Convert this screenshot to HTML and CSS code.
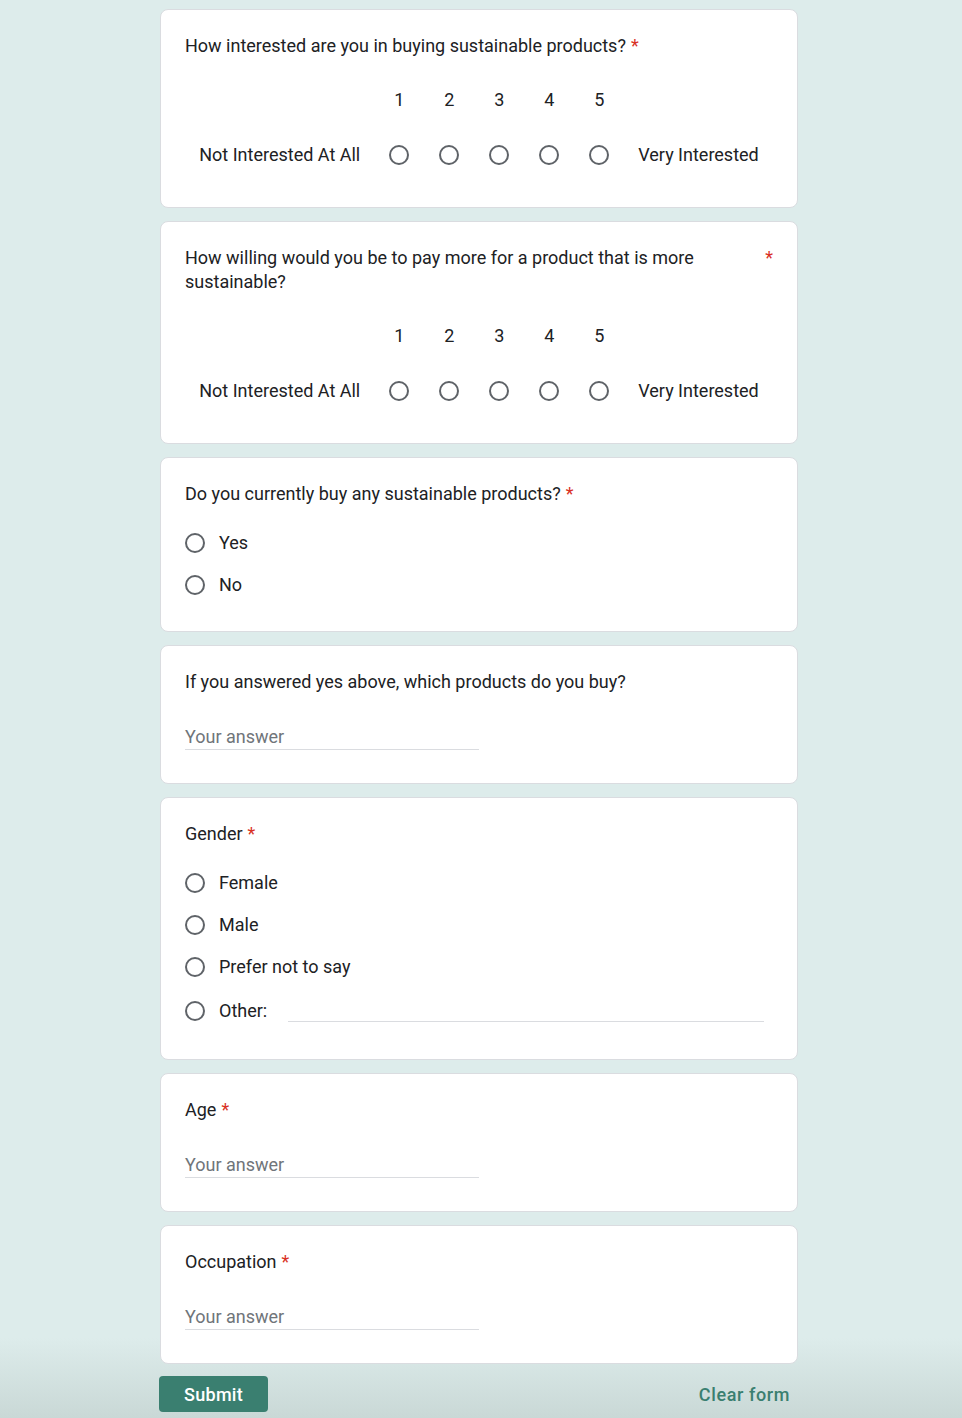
FILE: index.html
```html
<!DOCTYPE html>
<html lang="en">
<head>
<meta charset="utf-8">
<title>Sustainable products survey</title>
<link rel="stylesheet" href="styles.css">
</head>
<body>
<main class="page">
  <section class="card">
    <div class="title"><span class="title-text">How interested are you in buying sustainable products?</span><span class="req">*</span></div>
    <div class="scale">
      <span></span><span class="num">1</span><span class="num">2</span><span class="num">3</span><span class="num">4</span><span class="num">5</span><span></span>
      <span class="scale-label left">Not Interested At All</span>
      <span class="cell"><span class="radio"></span></span>
      <span class="cell"><span class="radio"></span></span>
      <span class="cell"><span class="radio"></span></span>
      <span class="cell"><span class="radio"></span></span>
      <span class="cell"><span class="radio"></span></span>
      <span class="scale-label right">Very Interested</span>
    </div>
  </section>

  <section class="card">
    <div class="title"><span class="title-text">How willing would you be to pay more for a product that is more sustainable?</span><span class="req">*</span></div>
    <div class="scale">
      <span></span><span class="num">1</span><span class="num">2</span><span class="num">3</span><span class="num">4</span><span class="num">5</span><span></span>
      <span class="scale-label left">Not Interested At All</span>
      <span class="cell"><span class="radio"></span></span>
      <span class="cell"><span class="radio"></span></span>
      <span class="cell"><span class="radio"></span></span>
      <span class="cell"><span class="radio"></span></span>
      <span class="cell"><span class="radio"></span></span>
      <span class="scale-label right">Very Interested</span>
    </div>
  </section>

  <section class="card card-options">
    <div class="title"><span class="title-text">Do you currently buy any sustainable products?</span><span class="req">*</span></div>
    <div class="options">
      <label class="option"><span class="radio"></span><span class="opt-text">Yes</span></label>
      <label class="option"><span class="radio"></span><span class="opt-text">No</span></label>
    </div>
  </section>

  <section class="card card-text">
    <div class="title"><span class="title-text">If you answered yes above, which products do you buy?</span></div>
    <div class="answer">Your answer</div>
  </section>

  <section class="card card-options">
    <div class="title"><span class="title-text">Gender</span><span class="req">*</span></div>
    <div class="options">
      <label class="option"><span class="radio"></span><span class="opt-text">Female</span></label>
      <label class="option"><span class="radio"></span><span class="opt-text">Male</span></label>
      <label class="option"><span class="radio"></span><span class="opt-text">Prefer not to say</span></label>
      <label class="option option-other"><span class="radio"></span><span class="opt-text">Other:</span><span class="other-line"></span></label>
    </div>
  </section>

  <section class="card card-text">
    <div class="title"><span class="title-text">Age</span><span class="req">*</span></div>
    <div class="answer">Your answer</div>
  </section>

  <section class="card card-text">
    <div class="title"><span class="title-text">Occupation</span><span class="req">*</span></div>
    <div class="answer">Your answer</div>
  </section>

  <div class="actions">
    <button class="submit" type="button">Submit</button>
    <span class="clear">Clear form</span>
  </div>
</main>
</body>
</html>
```

FILE: styles.css
```css
html {
  min-height: 100%;
  background: linear-gradient(to bottom, #ddeceb 0, #ddeceb calc(100% - 80px), #c9d8d6 100%) fixed;
}

body {
  margin: 0;
  font-family: Roboto, "Liberation Sans", Arial, sans-serif;
  color: #202124;
  font-size: 18px;
}

.page {
  width: 638px;
  margin-left: 160px;
  padding-top: 9px;
}

.card {
  box-sizing: border-box;
  background: #fff;
  border: 1px solid #dadce0;
  border-radius: 8px;
  padding: 24px 24px 28px;
  margin-bottom: 13px;
}

.title {
  display: flex;
  align-items: flex-start;
  line-height: 24px;
  font-size: 18px;
  letter-spacing: 0;
}

.req {
  color: #d93025;
  padding-left: 5px;
  flex: none;
}

.scale {
  display: grid;
  grid-template-columns: auto repeat(5, 50px) auto;
  grid-template-rows: 24px 48px;
  row-gap: 19px;
  justify-content: center;
  margin-top: 30px;
  line-height: 24px;
}

.num {
  text-align: center;
}

.cell {
  display: flex;
  align-items: center;
  justify-content: center;
}

.scale-label {
  display: flex;
  align-items: center;
}

.scale-label.left {
  padding-right: 14px;
}

.scale-label.right {
  padding-left: 14px;
}

.radio {
  box-sizing: border-box;
  width: 20px;
  height: 20px;
  border: 2px solid #5f6368;
  border-radius: 50%;
  flex: none;
}

.card-options {
  padding-bottom: 25px;
}

.options {
  margin-top: 16px;
}

.option {
  display: flex;
  align-items: center;
  height: 42px;
}

.option-other {
  height: 46px;
}

.opt-text {
  margin-left: 14px;
  line-height: 24px;
}

.other-line {
  flex: 1;
  align-self: flex-start;
  height: 33px;
  margin-left: 21px;
  margin-right: 9px;
  border-bottom: 1px solid #dadce0;
}

.card-text {
  padding-bottom: 33px;
}

.answer {
  width: 294px;
  margin-top: 31px;
  line-height: 24px;
  color: #70757a;
  border-bottom: 1px solid #dadce0;
}

.actions {
  display: flex;
  justify-content: space-between;
  align-items: center;
  margin-top: -1px;
  padding-right: 8px;
}

.submit {
  width: 109px;
  height: 36px;
  margin-left: -1px;
  border: none;
  border-radius: 4px;
  background: #3a7f70;
  color: #fff;
  font-family: Roboto, "Liberation Sans", Arial, sans-serif;
  font-size: 18px;
  font-weight: 500;
  letter-spacing: 0.3px;
  padding: 0;
}

.clear {
  color: #3a7f70;
  font-size: 18px;
  font-weight: 500;
  letter-spacing: 0.6px;
}
```
